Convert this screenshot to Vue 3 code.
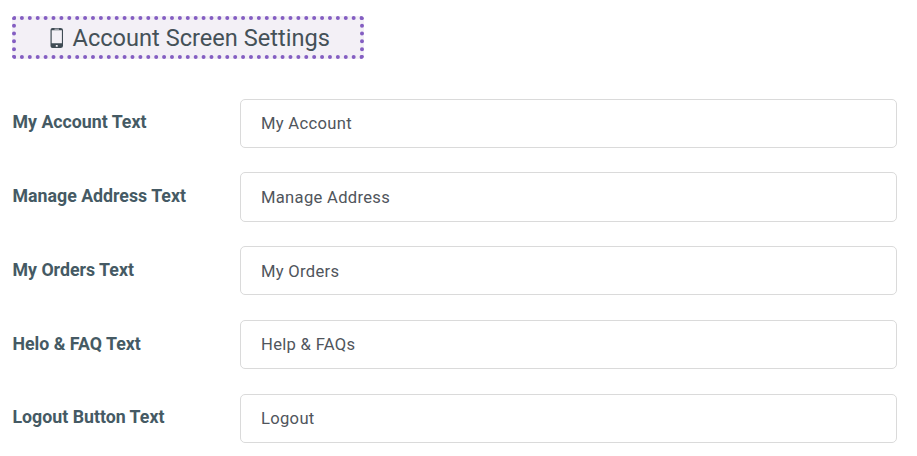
<script setup>
import { reactive } from 'vue'

const fields = reactive([
  { id: 'my-account', label: 'My Account Text', value: 'My Account' },
  { id: 'manage-address', label: 'Manage Address Text', value: 'Manage Address' },
  { id: 'my-orders', label: 'My Orders Text', value: 'My Orders' },
  { id: 'help-faq', label: 'Helo & FAQ Text', value: 'Help & FAQs' },
  { id: 'logout', label: 'Logout Button Text', value: 'Logout' },
])
</script>

<template>
  <main class="settings">
    <h3 class="heading">
      <svg class="phone" viewBox="0 0 14 20" aria-hidden="true">
        <path
          fill-rule="evenodd"
          d="M2.500 0h8Q13 0 13 2v16q0 2-2.500 2h-8Q0.500 20 0.500 18V2Q0.500 0 2.500 0ZM1.700 2.200v13H11.900V2.200ZM4.500 .8v.6H9V.8ZM5.800 17v1.800h1.900V17Z"
        />
      </svg>
      <span class="title">Account Screen Settings</span>
    </h3>
    <form class="rows" @submit.prevent>
      <div v-for="field in fields" :key="field.id" class="row">
        <label class="label" :for="field.id">{{ field.label }}</label>
        <input :id="field.id" v-model="field.value" class="input" type="text" />
      </div>
    </form>
  </main>
</template>

<style>
body {
  background: #fff;
}
</style>

<style scoped>
.settings {
  box-sizing: border-box;
  padding: 16px 20px 0 12px;
  font-family: Roboto, 'Liberation Sans', sans-serif;
}
.heading {
  box-sizing: border-box;
  display: flex;
  align-items: center;
  width: 352px;
  height: 43px;
  margin: 0;
  padding-left: 34px;
  border: 4px dotted #845ec2;
  border-radius: 3px;
  background: #f3f0f6;
  color: #455158;
  font-size: 23.6px;
  font-weight: 400;
  line-height: 33px;
  white-space: nowrap;
}
.title {
  padding-top: 2px;
}
.phone {
  flex: none;
  width: 14px;
  height: 20px;
  margin-right: 8.5px;
  fill: #3f4b54;
}
.rows {
  display: grid;
  gap: 24.5px;
  margin-top: 39.6px;
}
.row {
  display: grid;
  grid-template-columns: 227.5px 1fr;
  padding-left: 0.5px;
}
.label {
  padding-top: 11.8px;
  color: #455a64;
  font-size: 17.75px;
  font-weight: 700;
  line-height: 24px;
}
.input {
  box-sizing: border-box;
  width: 100%;
  height: 49.25px;
  margin: 0;
  padding: 0.9px 20px 0;
  border: 1px solid #dadada;
  border-radius: 5px;
  outline: none;
  background: #fff;
  color: #50555c;
  font-family: inherit;
  font-size: 16.6px;
  letter-spacing: 0.3px;
}
</style>
